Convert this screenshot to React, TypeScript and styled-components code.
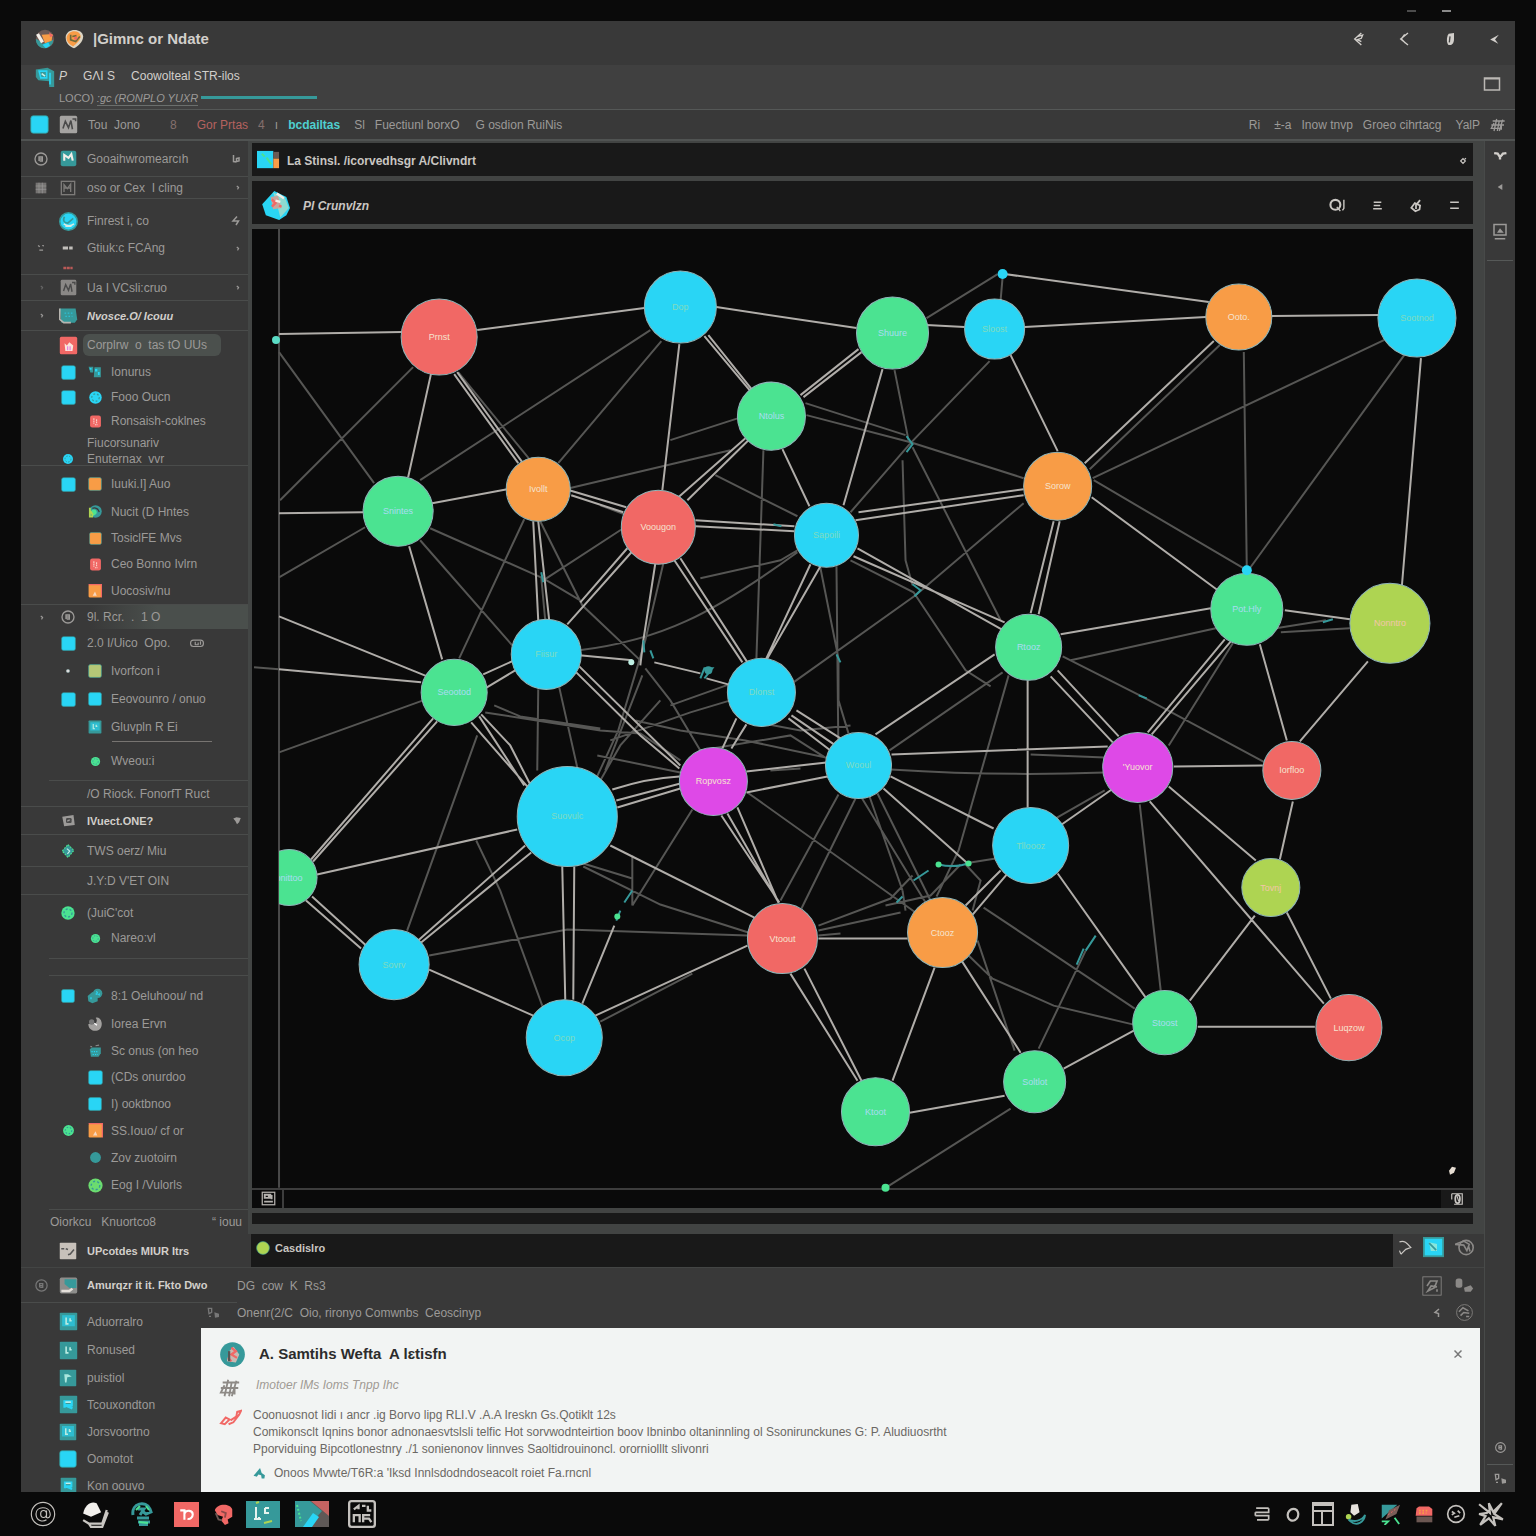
import React from "react";
import styled, { createGlobalStyle } from "styled-components";

const C = {
  black: "#0a0a0a",
  panel: "#191919",
  shell: "#393939",
  shellLight: "#404040",
  line: "#4a4c4b",
  text: "#9c9a98",
  bright: "#d2cfcb",
  teal: "#36999a",
  cyan: "#29d5f5",
  green: "#4be391",
  red: "#f16865",
  orange: "#f89c46",
  lime: "#aed452",
  magenta: "#de49e7",
  paper: "#f2f4f3",
};

const Global = createGlobalStyle`
  *, *::before, *::after { box-sizing: border-box; }
  body { margin: 0; background: ${C.black}; color: ${C.text};
    font-family: "Liberation Sans", Arial, sans-serif; font-size: 12px; line-height: 14px; }
  button { margin: 0; padding: 0; border: 0; background: none; color: inherit; font: inherit; text-align: left; cursor: pointer; }
  svg { display: block; flex: none; }
  h1, h2, p, ul { margin: 0; padding: 0; font: inherit; }
`;

/* ---------- icons ---------- */

type IconProps = { name: string; size?: number; color?: string };

const drawings: Record<string, (c: string) => React.ReactNode> = {
  square: (c) => <rect x="1" y="1" width="22" height="22" rx="3" fill={c} stroke={C.teal} />,
  orangeSquare: () => (
    <>
      <rect x="1" y="1" width="22" height="22" rx="2" fill={C.orange} />
      <path d="M1 1h22v22" fill="none" stroke={C.red} strokeWidth="2" />
      <path d="M8 20l4-7 3 7z" fill="#f8d8c0" />
    </>
  ),
  dot: (c) => <circle cx="12" cy="12" r="11" fill={c} stroke={C.teal} />,
  speckDot: (c) => (
    <>
      <circle cx="12" cy="12" r="10" fill={c} />
      <circle cx="12" cy="12" r="6" fill="none" stroke={C.teal} strokeWidth="2" strokeDasharray="3 3" />
    </>
  ),
  globe: () => (
    <>
      <circle cx="12" cy="12" r="11" fill={C.cyan} stroke={C.teal} strokeWidth="2" />
      <path d="M6 15c4 3 9 3 13 0M8 18h8" fill="none" stroke="#d8ece4" strokeWidth="2" />
      <path d="M7 6c-3 5 0 8 4 8l7-6" fill="none" stroke={C.teal} strokeWidth="2" />
    </>
  ),
  ring: (c) => (
    <>
      <circle cx="12" cy="12" r="9" fill="none" stroke={c} strokeWidth="2" />
      <path d="M9 15V9h5v6h-4M8 12h7" fill="none" stroke={c} strokeWidth="2" />
    </>
  ),
  tile: (c) => (
    <>
      <rect x="1" y="1" width="22" height="22" rx="1" fill={C.teal} />
      <rect x="4" y="4" width="16" height="14" fill={c} opacity="0.6" />
      <path d="M9 7v8h3M14 8v3h2" fill="none" stroke="#b9ece2" strokeWidth="2" />
    </>
  ),
  tileN: () => (
    <>
      <rect x="1" y="1" width="22" height="22" rx="3" fill={C.teal} />
      <path d="M6 15V7l6 4 4-5 2 9" fill="none" stroke="#f2eee8" strokeWidth="3" />
    </>
  ),
  tileP: () => (
    <>
      <rect x="1" y="1" width="22" height="22" rx="1" fill={C.teal} />
      <path d="M7 7h5l5 3-6 1-1 7H8z" fill="#a9e6dd" />
    </>
  ),
  tileR: () => (
    <>
      <rect x="1" y="1" width="22" height="22" rx="1" fill={C.teal} />
      <path d="M7 16V8h9v5H8l9 4" fill="none" stroke={C.cyan} strokeWidth="3" />
      <path d="M8 9h7" stroke="#c8efe8" strokeWidth="2" />
    </>
  ),
  grayTile: (c) => (
    <>
      <rect x="1" y="1" width="22" height="22" rx="2" fill={c} />
      <path d="M5 17l3-9 4 8 3-9 2 11M17 5h4v3" fill="none" stroke="#4a4a4a" strokeWidth="2" />
    </>
  ),
  grayTeal: () => (
    <>
      <rect x="1" y="2" width="22" height="20" rx="2" fill="#8d8d8b" />
      <path d="M7 4h15v11H13L7 10z" fill={C.teal} />
      <path d="M3 19h10l4-3" fill="none" stroke="#e5e0da" strokeWidth="3" />
    </>
  ),
  outlineTile: (c) => (
    <>
      <rect x="2" y="2" width="20" height="20" fill="none" stroke={c} strokeWidth="2" />
      <path d="M6 18V7l5 6 5-7v12M7 12h10" fill="none" stroke={c} strokeWidth="2" />
    </>
  ),
  hatch: (c) => (
    <>
      <rect x="4" y="4" width="16" height="16" fill={c} opacity="0.6" />
      <path d="M4 9h16M4 14h16M9 4v16M14 4v16" stroke={c} />
    </>
  ),
  screen: () => (
    <>
      <path d="M1 3h20l2 14-3 4H3z" fill={C.teal} />
      <path d="M1 3v14l5 4h9" fill="none" stroke="#b8b5b0" strokeWidth="2" />
      <path d="M7 9h11M8 13h9" stroke={C.cyan} strokeDasharray="2 2" />
    </>
  ),
  redTile: () => (
    <>
      <rect x="1" y="1" width="22" height="22" rx="2" fill={C.red} />
      <path d="M7 9l3 3 3-4 5 4-1 7H8z" fill="#fbe6dc" />
      <path d="M11 13v5M14 13v5" stroke={C.magenta} />
    </>
  ),
  redSmall: () => (
    <>
      <rect x="2" y="1" width="20" height="22" rx="4" fill={C.red} />
      <path d="M9 6v10M14 8v8M11 18h5" stroke="#fad4cc" strokeWidth="2" strokeDasharray="3 1" />
    </>
  ),
  pieces: () => (
    <>
      <path d="M1 3h8v10H4zM11 4h11v17H10z" fill={C.teal} />
      <path d="M3 5h3v3H3zM12 7h4v4h-4zM17 12h3v5h-3z" fill={C.cyan} />
    </>
  ),
  cubes: () => (
    <>
      <path d="M1 12l7-6 8 3v11l-8 3-6-3z" fill={C.teal} />
      <circle cx="16" cy="8" r="7" fill={C.teal} />
      <path d="M13 9h6M14 5l5 6M6 14v5" stroke={C.cyan} strokeWidth="2" strokeDasharray="3 2" />
    </>
  ),
  swirl: () => (
    <>
      <circle cx="12" cy="12" r="10" fill={C.teal} />
      <path d="M6 10c4-3 8 0 8 3s-4 6-8 6z" fill={C.green} />
      <path d="M3 6v14h5M4 11l4 7" fill="none" stroke={C.lime} strokeWidth="3" />
      <path d="M7 7c5-2 10 1 11 6" fill="none" stroke="#3a3a3a" strokeWidth="2" />
    </>
  ),
  grayBall: () => (
    <>
      <path d="M2 12c0 14 22 14 20-2-1-7-7-9-9-7 3 2 2 9-3 9z" fill="#a3a19f" />
      <circle cx="7" cy="9" r="4" fill="#777" />
      <path d="M11 11l4 3" stroke="#fff" strokeWidth="2" />
    </>
  ),
  crate: () => (
    <>
      <path d="M3 9l4-3h15v10l-4 6H5z" fill={C.teal} />
      <path d="M6 13h12M8 18h9" stroke={C.cyan} strokeWidth="2" strokeDasharray="2 2" />
      <path d="M4 4l3 1M13 3l6-1" stroke="#888" strokeWidth="2" />
    </>
  ),
  diamond: () => (
    <>
      <path d="M12 1l10 10-10 12L2 12z" fill={C.teal} stroke={C.green} strokeWidth="2" strokeDasharray="3 2" />
      <path d="M10 8l5 4-4 5" fill="none" stroke="#c8efe8" strokeWidth="2" />
    </>
  ),
  camera: (c) => (
    <>
      <path d="M2 6l18-3 2 16-17 2z" fill={c} />
      <rect x="8" y="8" width="9" height="8" rx="2" fill="#4a4a4a" />
      <path d="M10 13l4-2" stroke={c} strokeWidth="2" />
    </>
  ),
  paperTile: () => (
    <>
      <rect x="1" y="1" width="22" height="22" rx="1" fill="#c7c1ba" />
      <path d="M3 9h4M9 9l3 1M12 17l3-1 5-6" fill="none" stroke="#555" strokeWidth="2" />
    </>
  ),
  dash: (c) => <path d="M3 12h9M14 12h6" stroke={c} strokeWidth="5" />,
  redDash: () => <path d="M4 12h16" stroke={C.red} strokeWidth="4" strokeDasharray="5 1" opacity="0.7" />,
  tick: (c) => <path d="M10 8l5 4-3 5" fill="none" stroke={c} strokeWidth="3" />,
  marks: (c) => <path d="M5 6l4 3M15 6l4 1M8 17h9" stroke={c} strokeWidth="3" />,
  chip: (c) => <path d="M7 4v13l6 1M13 11l5-1v6l-5 1z" fill="none" stroke={c} strokeWidth="3" />,
  spark: (c) => <path d="M14 3L6 12h11l-5 8" fill="none" stroke={c} strokeWidth="3" />,
  heart: (c) => <path d="M3 6l8-3 10 2-4 10-5 5-4-8z" fill={c} />,
  capsule: (c) => (
    <>
      <rect x="1" y="7" width="22" height="11" rx="5" fill="none" stroke={c} strokeWidth="2" />
      <path d="M9 10v5h5v-4M18 9v6" fill="none" stroke={c} strokeWidth="2" />
    </>
  ),
  logoA: () => (
    <>
      <circle cx="12" cy="12" r="11" fill="#6d5a55" />
      <path d="M1 12c4 2 5 2 8 6l13-5c0 6-5 10-11 10C5 23 1 18 1 12z" fill={C.teal} />
      <path d="M8 7l13-1-1 8-8 3z" fill={C.orange} />
      <path d="M17 4l5 4-4 2z" fill={C.red} />
      <path d="M3 6l6 10" stroke="#f4efe8" strokeWidth="4" />
      <path d="M9 19l7-3 2 4-5 3z" fill={C.cyan} />
    </>
  ),
  logoB: () => (
    <>
      <path d="M2 10C2-1 22-2 23 9c0 6-6 12-11 14C6 21 2 17 2 10z" fill="#dcd5c4" />
      <path d="M3 11C4 1 18 0 20 8c0 6-5 9-9 13C6 18 3 15 3 11z" fill={C.orange} />
      <path d="M8 7v6l6 2 5-6M10 9l5-1" fill="none" stroke="#6d6a3b" strokeWidth="2" />
      <circle cx="14" cy="11" r="2" fill={C.red} />
    </>
  ),
  logoC: () => (
    <>
      <path d="M1 3l14-2 8 4v19h-6v-7L4 16l-3-4z" fill={C.teal} />
      <path d="M5 5h9v8H7zM18 7v14" fill="none" stroke={C.cyan} strokeWidth="2" />
      <path d="M8 8l4 3" stroke="#c8efe8" strokeWidth="2" />
    </>
  ),
  logoD: () => (
    <>
      <rect x="0" y="2" width="17" height="18" fill={C.cyan} />
      <path d="M5 5l3 3M10 9l5 7" stroke={C.green} strokeWidth="2" />
      <rect x="17" y="3" width="6" height="7" fill="#6a5a52" />
      <rect x="17" y="10" width="6" height="10" fill={C.orange} />
    </>
  ),
  logoE: () => (
    <>
      <path d="M11 0l10 5 3 9-3 6-6 4-11-4-3-9z" fill={C.cyan} />
      <path d="M10 1l10 5 3 8-7 8-2-8z" fill="#8edad0" />
      <path d="M8 5l6-1 3 10-7 1z" fill="#c9a59c" />
      <path d="M9 7l3 3-3 3M15 12l2 1" fill="none" stroke={C.red} strokeWidth="2" />
      <path d="M13 2l6 4M12 8l4 1" fill="none" stroke="#f4efe8" strokeWidth="2" />
    </>
  ),
  chevR: (c) => <path d="M17 3L7 12l10 9M12 8l7-2-2 5-6 2 6 3" fill="none" stroke={c} strokeWidth="2" />,
  chev: (c) => <path d="M18 3L7 12l11 9M13 5l-5 7 6 6" fill="none" stroke={c} strokeWidth="2" />,
  leaf: (c) => (
    <>
      <path d="M10 4l8-1v9c0 6-3 10-8 9-3-2-4-11 0-17z" fill={c} />
      <path d="M12 8l-1 9" stroke="#444" strokeWidth="2" />
    </>
  ),
  arrow: (c) => <path d="M20 3L4 12l15 8-6-8z" fill={c} />,
  window: (c) => <path d="M2 4h20v16H2zM2 5h20" fill="none" stroke={c} strokeWidth="2" />,
  search: (c) => (
    <>
      <circle cx="9" cy="11" r="7" fill="none" stroke={c} strokeWidth="3" />
      <path d="M11 14l5 6M21 4v12l-2 3" fill="none" stroke={c} strokeWidth="2" />
    </>
  ),
  lines: (c) => <path d="M5 6h14M5 12h12M4 18h16" stroke={c} strokeWidth="3" />,
  twoLines: (c) => <path d="M4 6h16M4 17h16" stroke={c} strokeWidth="3" />,
  drop: (c) => <path d="M4 15l6-8 9 4-1 7-7 3zM14 8l5-6M12 8v9" fill="none" stroke={c} strokeWidth="3" />,
  smallRing: (c) => <path d="M8 12l4-4 4 4-4 4zM15 9l2-2" fill="none" stroke={c} strokeWidth="2" />,
  check: (c) => <path d="M2 7l6 1 4 6 5-6 6-1M12 13v5" fill="none" stroke={c} strokeWidth="4" />,
  wedge: (c) => <path d="M8 12l8-5v10z" fill={c} />,
  badge: (c) => (
    <>
      <path d="M4 2h16v14H4zM5 21h14" fill="none" stroke={c} strokeWidth="2" />
      <path d="M8 13l4-6 5 6z" fill={c} />
    </>
  ),
  pair: (c) => (
    <>
      <path d="M5 5h5v6l-4 2zM6 17h3" fill="none" stroke={c} strokeWidth="2" />
      <path d="M14 11l7 2v5l-6 1z" fill={c} />
    </>
  ),
  disk: (c) => (
    <>
      <rect x="2" y="2" width="20" height="20" fill="none" stroke={c} strokeWidth="2" />
      <path d="M6 6h9v5H6zM5 17h14M11 8h6v5" fill="none" stroke={c} strokeWidth="3" />
    </>
  ),
  zero: (c) => (
    <>
      <path d="M3 3h18v18H7" fill="none" stroke={c} strokeWidth="2" />
      <ellipse cx="13" cy="12" rx="4" ry="7" fill="none" stroke={c} strokeWidth="3" />
      <path d="M3 3v10M12 7l3 9" stroke={c} strokeWidth="2" />
    </>
  ),
  bend: (c) => <path d="M4 3c8-3 12 2 18 9l-8 3-8 8M6 22l-2-5" fill="none" stroke={c} strokeWidth="2" />,
  eye: (c) => (
    <>
      <circle cx="14" cy="12" r="9" fill="none" stroke={c} strokeWidth="2" />
      <path d="M0 8l11-4 7 4-3 8-4-7zM17 10l2 7" fill="none" stroke={c} strokeWidth="2" />
    </>
  ),
  linkBox: (c) => (
    <>
      <rect x="1" y="1" width="22" height="22" fill="none" stroke={c} strokeWidth="1" />
      <path d="M6 12l4-6h8l-3 8-8 4 4-6 7 1M18 16v3" fill="none" stroke={c} strokeWidth="2" />
    </>
  ),
  blobs: (c) => (
    <>
      <rect x="2" y="3" width="8" height="11" rx="3" fill={c} />
      <path d="M12 14l8-3 3 4-3 4h-7z" fill={c} />
    </>
  ),
  back: (c) => <path d="M16 4l-8 7 7 2v7" fill="none" stroke={c} strokeWidth="3" />,
  chartRing: (c) => (
    <>
      <circle cx="12" cy="12" r="10" fill="none" stroke={c} strokeWidth="1" />
      <path d="M5 11l5-5 7 4M7 16l4-4 7 1M14 17h4" fill="none" stroke={c} strokeWidth="2" />
    </>
  ),
  cyanBox: () => (
    <>
      <rect x="1" y="1" width="22" height="21" fill={C.cyan} stroke={C.teal} strokeWidth="2" />
      <path d="M7 6l9 2v8H9z" fill="#86e6dc" />
      <path d="M7 7l8 8" stroke={C.teal} strokeWidth="2" />
    </>
  ),
  pen: () => <path d="M2 17l5-6 4 2-5 5zM10 18l5-2 6-8 2-4-4 1-1 5-6 4" fill="none" stroke={C.red} strokeWidth="2" />,
  scribble: (c) => (
    <path d="M4 6h18M2 12h19M6 9l-4 8h13M10 3L6 21M14 5l-3 16M19 4l-5 17M4 17h12M17 10v9" fill="none" stroke={c} strokeWidth="2" />
  ),
  person: () => (
    <>
      <circle cx="12" cy="12" r="11" fill={C.teal} />
      <path d="M7 18l2-9 4-4 5 7-3 7z" fill="#c9b9b2" />
      <path d="M11 6l4 3-4 3 5 3M8 15l3 3" fill="none" stroke={C.red} strokeWidth="2" />
      <path d="M9 9v9" stroke="#555" strokeWidth="2" />
    </>
  ),
  sail: () => <path d="M1 16L13 2l3 9 6 4-1 6h-5l-1-6-5-1-3 4z" fill={C.teal} />,
  close: (c) => <path d="M5 5l6 6v3l-6 5M19 5l-6 6v3l6 5M10 12h4" fill="none" stroke={c} strokeWidth="3" />,
  at: (c) => (
    <>
      <circle cx="12" cy="12" r="10" fill="none" stroke={c} strokeWidth="1" />
      <path d="M15 9v6c2 1 4-1 3-4-1-6-12-6-12 1 0 6 6 7 9 5M15 12c0-4-5-4-5 0s5 4 5 0" fill="none" stroke={c} strokeWidth="1" />
    </>
  ),
  hat: () => (
    <>
      <path d="M1 11C3 3 8 0 13 2l4 8-9 4z" fill="#f2f0ed" />
      <path d="M1 17l5 3h12l4-12M6 20l2 3h10l5-13" fill="none" stroke="#c9c6c2" strokeWidth="2" />
    </>
  ),
  bust: () => (
    <>
      <path d="M3 13C1 1 16-2 20 7l1 3-5 2-4-3M8 7h6l-4 6M7 16h12M8 20h12M9 23h9" fill="none" stroke={C.teal} strokeWidth="3" />
      <path d="M6 8l4-4M16 4l3 4M9 20l9 1" stroke={C.green} strokeWidth="2" />
    </>
  ),
  redApp: () => (
    <>
      <rect x="0" y="0" width="24" height="24" fill={C.red} />
      <path d="M6 8h4v9M10 11c2-4 8-3 8 1 0 3-3 5-5 4" fill="none" stroke="#fff" strokeWidth="2" />
    </>
  ),
  redPin: () => (
    <>
      <path d="M2 8C4 0 19 0 21 7v8l-5 3 1 4-4 2-4-5 2-4-6-2z" fill={C.red} />
      <path d="M9 9l5 2-1 5" fill="none" stroke="#8f4a48" strokeWidth="2" />
      <path d="M3 11l3 7 4 1" fill="none" stroke="#6b5752" strokeWidth="2" />
    </>
  ),
  kite: () => (
    <>
      <path d="M3 2h17L3 17z" fill={C.teal} />
      <path d="M7 18L11 8l12-6-4 10z" fill="#7a5d58" />
      <path d="M3 20h7l-4 4M17 16l5 7" fill="none" stroke={C.green} strokeWidth="2" />
      <path d="M10 13l9-7" stroke={C.red} strokeDasharray="2 2" />
    </>
  ),
  sticker: (c) => (
    <>
      <rect x="1" y="1" width="22" height="22" rx="2" fill="none" stroke={c} strokeWidth="2" />
      <path d="M5 8l4-3v3M12 5h3M17 5v4h3M5 19v-6h5v6M13 19v-6h6M13 16h5l2 3" fill="none" stroke={c} strokeWidth="2" />
    </>
  ),
  stack: (c) => <path d="M5 5h15M4 10h17M4 14h17M6 19h14M4 10v4M20 5v5M20 14v5" fill="none" stroke={c} strokeWidth="2" />,
  oval: (c) => <ellipse cx="12" cy="13" rx="7" ry="8" fill="none" stroke={c} strokeWidth="3" transform="rotate(20 12 13)" />,
  layout: (c) => <path d="M2 1h20v22H2zM2 9h20M11 9v14M2 3h20" fill="none" stroke={c} strokeWidth="2" />,
  dish: () => (
    <>
      <path d="M8 2l7-1 2 9-6 4-4-4z" fill="#e6e2dd" />
      <circle cx="5" cy="15" r="3" fill={C.lime} />
      <path d="M5 18c6 3 14 2 18-5-1 8-9 13-16 7z" fill="none" stroke={C.teal} strokeWidth="2" />
    </>
  ),
  lunch: () => (
    <>
      <path d="M3 5l3-2h12l4 3v8H2z" fill={C.red} />
      <path d="M6 8h12M6 11h9" stroke={C.orange} strokeWidth="2" strokeDasharray="2 2" />
      <path d="M3 15h19v7H3z" fill="#6b5752" />
    </>
  ),
  face: (c) => (
    <>
      <circle cx="12" cy="12" r="10" fill="none" stroke={c} strokeWidth="2" />
      <path d="M7 9l3 2-3 2M14 8l3 3M10 16l6-2" fill="none" stroke={c} strokeWidth="2" />
    </>
  ),
  burst: (c) => (
    <path d="M1 3l10 8-1-9 4 8 8-8-7 10 8 5-9-2 2 8-6-7-8 6 5-8-6-2 8-1" fill="none" stroke={c} strokeWidth="2" />
  ),
};

const Icon = ({ name, size = 16, color = C.text }: IconProps) => (
  <svg width={size} height={size} viewBox="0 0 24 24" aria-hidden="true">
    {drawings[name](color)}
  </svg>
);

/* ---------- shell ---------- */

const Page = styled.div`
  min-height: 100vh;
  display: flex;
  flex-direction: column;
`;

const TopStrip = styled.div`
  height: 21px;
  padding: 0 85px;
  display: flex;
  justify-content: flex-end;
  align-items: center;
  gap: 26px;
`;

const StripMark = styled.i<{ $dim?: boolean }>`
  width: 9px;
  height: 2px;
  background: ${(p) => (p.$dim ? "#4c4c4c" : "#8a8a8a")};
`;

const Shell = styled.main`
  flex: 1;
  margin: 0 21px;
  background: ${C.shell};
`;

const TitleBar = styled.header`
  height: 44px;
  padding: 0 14px 8px;
  display: flex;
  align-items: center;
  gap: 9px;
  color: ${C.bright};
`;

const Title = styled.h1`
  font-weight: 600;
  font-size: 15px;
  line-height: 20px;
  flex: 1;
`;

const TitleActions = styled.div`
  display: flex;
  align-items: center;
  gap: 30px;
`;

const SubBar = styled.div`
  height: 45px;
  background: ${C.shellLight};
  border-bottom: 1px solid #555857;
  padding: 2px 14px 8px;
  display: flex;
  align-items: flex-start;
`;

const SubText = styled.div`
  flex: 1;
  display: flex;
  flex-direction: column;
  gap: 8px;
  padding: 2px 0 0 4px;
`;

const SubLine = styled.div`
  display: flex;
  align-items: center;
  gap: 16px;
  color: ${C.bright};
`;

const SubTabs = styled.div`
  display: flex;
  align-items: flex-start;
  gap: 3px;
  font-size: 11px;
  em { border-bottom: 1px solid #6b6f6d; }
`;

const TabLine = styled.span`
  width: 116px;
  height: 3px;
  margin-top: 5px;
  background: ${C.teal};
`;

const WindowButton = styled.button`
  align-self: center;
`;

const ToolBar = styled.nav`
  height: 31px;
  border-bottom: 2px solid #505352;
  padding: 0 9px;
  display: flex;
  align-items: center;
  gap: 10px;
`;

const ToolItem = styled.button<{ $tone?: string; $strong?: boolean; $gap?: number }>`
  color: ${(p) => p.$tone ?? C.text};
  font-weight: ${(p) => (p.$strong ? 700 : 400)};
  margin-left: ${(p) => p.$gap ?? 0}px;
  white-space: nowrap;
`;

const Spacer = styled.span`
  flex: 1;
`;

const Columns = styled.div`
  display: flex;
`;

const Content = styled.div`
  flex: 1;
  min-width: 0;
`;

/* ---------- sidebar ---------- */

const Side = styled.nav`
  width: 229px;
  flex: none;
  border-right: 2px solid #434645;
`;

const Row = styled.button<{ $h: number; $line?: boolean; $tint?: boolean }>`
  width: 100%;
  height: ${(p) => p.$h}px;
  padding: 0 6px 0 8px;
  display: grid;
  grid-template-columns: 24px 30px 24px 1fr auto;
  align-items: center;
  justify-items: center;
  border-bottom: ${(p) => (p.$line ? "1px solid " + C.line : "0")};
  background: ${(p) => (p.$tint ? "linear-gradient(90deg, #393939 30%, #4a4f4c 60%)" : "none")};
`;

const Label = styled.span<{ $deep?: boolean; $strong?: boolean; $italic?: boolean; $pill?: boolean }>`
  grid-column: ${(p) => (p.$deep ? "4 / 5" : "3 / 5")};
  justify-self: start;
  padding-left: 4px;
  white-space: pre;
  color: ${(p) => (p.$strong ? C.bright : C.text)};
  font-weight: ${(p) => (p.$strong ? 700 : 400)};
  font-size: ${(p) => (p.$strong ? 11 : 12)}px;
  font-style: ${(p) => (p.$italic ? "italic" : "normal")};
  ${(p) => p.$pill && "background:#4b504d;border-radius:6px;line-height:22px;padding-right:14px;"}
`;

const Rule = styled.div<{ $h: number; $line?: boolean; $short?: boolean }>`
  height: ${(p) => p.$h}px;
  margin-left: ${(p) => (p.$short ? 91 : 28)}px;
  margin-right: ${(p) => (p.$short ? 36 : 0)}px;
  border-bottom: ${(p) => (p.$line ? "1px solid " + (p.$short ? "#777471" : C.line) : "0")};
`;

const Slot = styled.span<{ $col: number; $inset?: boolean }>`
  grid-column: ${(p) => p.$col};
  grid-row: 1;
  padding-right: ${(p) => (p.$inset ? 38 : 0)}px;
`;

type Glyph = [name: string, size: number, color?: string];
type Item = {
  h: number;
  text?: string;
  a?: Glyph;
  b?: Glyph;
  c?: Glyph;
  tail?: Glyph;
  deep?: boolean;
  strong?: boolean;
  italic?: boolean;
  line?: boolean;
  short?: boolean;
  pill?: boolean;
  tint?: boolean;
  inset?: boolean;
};

const items: Item[] = [
  { h: 36, text: "Gooaihwromearcıh", a: ["ring", 16], b: ["tileN", 17], tail: ["chip", 12], line: true },
  { h: 22, text: "oso or Cex  I cling", a: ["hatch", 16], b: ["outlineTile", 16, "#7d7b79"], tail: ["tick", 9], line: true },
  { h: 8 },
  { h: 28, text: "Finrest i, co", b: ["globe", 19], tail: ["spark", 12] },
  { h: 26, text: "Gtiuk:c FCAng", a: ["marks", 10], b: ["dash", 14, "#c2bfbb"], tail: ["tick", 9] },
  { h: 14, b: ["redDash", 14], line: true },
  { h: 26, text: "Ua I VCsli:cruo", a: ["tick", 9, "#666"], b: ["grayTile", 17, "#8a8886"], tail: ["tick", 9], line: true },
  { h: 30, text: "Nvosce.O/ Icouu", a: ["tick", 9], b: ["screen", 19], strong: true, italic: true, line: true },
  { h: 28, text: "Corplrw  o  tas tO UUs", b: ["redTile", 19], pill: true },
  { h: 26, text: "Ionurus", b: ["square", 15, C.cyan], c: ["pieces", 14], deep: true },
  { h: 24, text: "Fooo Oucn", b: ["square", 15, C.cyan], c: ["speckDot", 15, C.cyan], deep: true },
  { h: 24, text: "Ronsaish-coklnes", c: ["redSmall", 13], deep: true },
  { h: 19, text: "Fiucorsunariv" },
  { h: 14, text: "Enuternax  vvr", b: ["speckDot", 12, C.cyan], line: true },
  { h: 4 },
  { h: 28, text: "Iuuki.I] Auo", b: ["square", 15, C.cyan], c: ["square", 14, C.orange], deep: true },
  { h: 27, text: "Nucit (D Hntes", c: ["swirl", 15], deep: true },
  { h: 26, text: "TosiclFE Mvs", c: ["square", 13, C.orange], deep: true },
  { h: 26, text: "Ceo Bonno Ivlrn", c: ["redSmall", 13], deep: true },
  { h: 28, text: "Uocosiv/nu", c: ["orangeSquare", 14], deep: true, line: true },
  { h: 24, text: "9l. Rcr.  .  1 O", a: ["tick", 9], b: ["ring", 16], tint: true },
  { h: 28, text: "2.0 I/Uico  Opo.", b: ["square", 15, C.cyan], tail: ["capsule", 14], inset: true },
  { h: 28, text: "Ivorfcon i", b: ["dot", 4, "#ddd"], c: ["square", 14, "#b5c877"], deep: true },
  { h: 28, text: "Eeovounro / onuo", b: ["square", 15, C.cyan], c: ["square", 14, C.cyan], deep: true },
  { h: 28, text: "Gluvpln R Ei", c: ["tile", 14, C.cyan], deep: true },
  { h: 1, line: true, short: true },
  { h: 5 },
  { h: 28, text: "Wveou:i", c: ["speckDot", 11, C.green], deep: true },
  { h: 6, line: true },
  { h: 26, text: "/O Riock. FonorfT Ruct", line: true },
  { h: 28, text: "IVuect.ONE?", b: ["camera", 15], tail: ["heart", 10], strong: true, line: true },
  { h: 32, text: "TWS oerz/ Miu", b: ["diamond", 14], line: true },
  { h: 28, text: "J.Y:D V'ET OIN", line: true },
  { h: 4 },
  { h: 28, text: "(JuiC'cot", b: ["speckDot", 16, C.green] },
  { h: 22, text: "Nareo:vl", c: ["speckDot", 11, C.green], deep: true },
  { h: 10, line: true },
  { h: 17, line: true },
  { h: 6 },
  { h: 28, text: "8:1 Oeluhoou/ nd", b: ["square", 14, C.cyan], c: ["cubes", 16], deep: true },
  { h: 27, text: "Iorea Ervn", c: ["grayBall", 16], deep: true },
  { h: 27, text: "Sc onus (on heo", c: ["crate", 14], deep: true },
  { h: 26, text: "(CDs onurdoo", c: ["square", 15, C.cyan], deep: true },
  { h: 27, text: "I) ooktbnoo", c: ["square", 14, C.cyan], deep: true },
  { h: 27, text: "SS.Iouo/ cf or", b: ["speckDot", 13, C.green], c: ["orangeSquare", 15], deep: true },
  { h: 27, text: "Zov zuotoirn", c: ["speckDot", 13, C.teal], deep: true },
  { h: 28, text: "Eog I /Vulorls", c: ["speckDot", 17, "#6bdc6f"], deep: true },
  { h: 11, line: true },
];

const glyph = (g: Glyph | undefined, col: number, inset?: boolean) =>
  g && (
    <Slot $col={col} $inset={inset}>
      <Icon name={g[0]} size={g[1]} color={g[2]} />
    </Slot>
  );

const SideRow = ({ item }: { item: Item }) => {
  if (!item.text && !item.b) return <Rule $h={item.h} $line={item.line} $short={item.short} />;
  return (
    <Row type="button" $h={item.h} $line={item.line} $tint={item.tint}>
      {glyph(item.a, 1)}
      {glyph(item.b, 2)}
      {glyph(item.c, 3)}
      <Label $deep={item.deep} $strong={item.strong} $italic={item.italic} $pill={item.pill}>
        {item.text}
      </Label>
      {glyph(item.tail, 5, item.inset)}
    </Row>
  );
};

const SideFoot = styled.div`
  height: 24px;
  padding: 0 6px 0 29px;
  display: flex;
  align-items: center;
  gap: 10px;
`;

/* ---------- graph ---------- */

const Work = styled.section`
  flex: 1;
  min-width: 0;
  padding: 2px 11px 0 2px;
  background: #424443;
  display: flex;
  flex-direction: column;
  gap: 5px;
`;

const DocBar = styled.div<{ $tall?: boolean }>`
  height: ${(p) => (p.$tall ? 43 : 33)}px;
  background: ${C.panel};
  color: #c9c6c2;
  padding: ${(p) => (p.$tall ? "6px 12px 0 9px" : "2px 3px 0 5px")};
  display: flex;
  align-items: center;
  gap: 7px;
`;

const DocTitle = styled.span<{ $wide?: boolean }>`
  flex: 1;
  font-weight: 700;
  font-style: ${(p) => (p.$wide ? "italic" : "normal")};
  padding-left: ${(p) => (p.$wide ? 6 : 0)}px;
`;

const DocActions = styled.div`
  display: flex;
  align-items: center;
  gap: 25px;
`;

const Stage = styled.div`
  background: ${C.black};
`;

const Graph = styled.svg`
  width: 100%;
  height: auto;
  overflow: visible;
  position: relative;
  z-index: 1;
  text { font: 9px "Liberation Sans", Arial, sans-serif; text-anchor: middle; }
`;

const StageFoot = styled.div`
  height: 20px;
  border-top: 2px solid #3d3d3d;
  display: flex;
  align-items: center;
  justify-content: space-between;
`;

const FootCell = styled.button`
  height: 18px;
  padding: 0 6px 0 9px;
  display: flex;
  align-items: center;
  border-right: 2px solid #3d3d3d;
  &:last-child { border-right: 0; padding: 0 9px; background: ${C.panel}; }
`;

const Shelf = styled.div`
  height: 11px;
  background: ${C.panel};
`;

type Node = [x: number, y: number, r: number, fill: string, label: string];

const nodes: Node[] = [
  [439, 337, 38, C.red, "Prnst"],
  [680, 307, 36, C.cyan, "Dop"],
  [892, 333, 36, C.green, "Shuure"],
  [994, 329, 30, C.cyan, "Sloost"],
  [1238, 317, 33, C.orange, "Ooto."],
  [1416, 318, 39, C.cyan, "Sootnod"],
  [771, 416, 34, C.green, "Ntolus"],
  [538, 489, 32, C.orange, "Ivollt"],
  [398, 511, 35, C.green, "Snintes"],
  [658, 527, 37, C.red, "Voougon"],
  [826, 535, 32, C.cyan, "Sapoili"],
  [1057, 486, 34, C.orange, "Sorow"],
  [1246, 609, 36, C.green, "Pot.Hly"],
  [1389, 623, 40, C.lime, "Nonntro"],
  [546, 654, 35, C.cyan, "Fiisur"],
  [454, 692, 33, C.green, "Seootod"],
  [761, 692, 34, C.cyan, "Dlonst"],
  [1028, 647, 33, C.green, "Rtooz"],
  [858, 765, 33, C.cyan, "Wooul"],
  [713, 781, 34, C.magenta, "Ropvosz"],
  [1137, 767, 35, C.magenta, "'Yuovor"],
  [1291, 770, 29, C.red, "Iorfloo"],
  [567, 816, 50, C.cyan, "Suovulc"],
  [1030, 845, 38, C.cyan, "Tlloooz"],
  [1270, 887, 29, C.lime, "Tovnj"],
  [289, 877, 28, C.green, "onittoo"],
  [394, 964, 35, C.cyan, "Sovrv"],
  [564, 1037, 38, C.cyan, "Ocop"],
  [782, 938, 35, C.red, "Vtoout"],
  [942, 932, 35, C.orange, "Ctooz"],
  [1164, 1022, 32, C.green, "Stoost"],
  [1348, 1027, 33, C.red, "Luqzow"],
  [875, 1111, 34, C.green, "Ktoot"],
  [1034, 1081, 31, C.green, "Soltlot"],
];

const strongEdges = `
M279 334L402 332M477 330L644 308M716 307L856 328M431 373L408 477M457 372L522 462M454 374L518 463
M679 344L662 490M704 336L750 391M708 335L752 390M858 349L800 395M861 352L803 397M882 369L843 505
M745 438L678 497M748 440L687 500M782 449L809 506M926 325L964 327M1024 327L1205 317M1004 274L1208 302
M1271 316L1378 315M1010 355L1057 451M1213 341L1084 463M858 512L1023 489M855 520L1023 495
M1091 497L1217 590M1420 358L1401 585M1053 521L1030 613M1059 521L1038 614M857 548L1001 629M853 556L1004 622
M1060 634L1210 608M1284 610L1349 619M569 490L626 507M571 495L623 512M695 520L794 526M695 526L794 531
M432 503L507 489M279 513L363 512M409 546L442 659M279 616L427 676M279 669L421 682
M533 521L538 620M538 521L549 620M627 548L580 602M632 551L567 624M674 560L742 662M680 558L747 662
M820 566L767 658M810 564L765 660M483 674L514 660M485 688L515 670
M579 666L680 765M576 672L640 735L679 768M433 718L311 859M437 721L313 861M471 722L527 786M479 716L524 785
M481 714L510 745L530 784M317 874L517 829M525 845L418 940M531 852L421 942M306 900L361 948M312 896L366 945
M429 969L533 1015M562 866L565 999M574 866L573 999M595 1015L747 945M610 845L754 917
M612 789C640 780 660 777 679 776M616 800L680 783M617 807L680 788M721 815L779 902M727 813L777 900M737 807L778 902
M746 771L826 762M746 792L827 776M790 973L857 1080M804 968L861 1080M818 938L907 938M934 967L892 1080
M909 1112L1004 1095M1063 1068L1133 1030M961 960L1020 1052M1197 1026L1314 1026M891 754L1107 746
M890 776L993 828M883 788L966 862M1027 680L1027 807M1050 676L1112 742M1057 670L1118 736
M994 654L875 734M1111 789L1061 824M1173 766L1262 765M1259 644L1286 740M1367 661L1299 741
M1224 639L1147 732M1230 641L1151 734M1168 786L1255 860M1149 801L1323 1003M1292 801L1279 859
M1254 915L1189 1000M1286 912L1330 998M1057 873L1145 997M1000 870L965 905M1006 874L972 914
M746 724L731 748M736 718L722 748M791 715L835 745M796 710L840 738M788 718L830 750
M614 925L582 1003M655 563L643 640L640 665M579 655L632 660M654 662L700 673M706 678L735 686`;

const softEdges = `
M279 352L374 483M413 367L280 500M420 480L650 330M558 463L661 341M279 577L365 527M430 528L543 578L580 600
M420 540L512 645M524 519L459 658M569 488L730 450M670 440L738 418M715 475L797 516M763 450L756 658
M805 403L905 435M806 415L910 442L1023 478M894 370L908 440M989 361L910 443L850 512M912 447L1000 620
M902 460L905 560L912 585M1023 503L915 595L793 682M850 560L913 592L965 670L990 686M1243 352L1246 570
M1219 345L1089 469M1383 340L1092 478M1404 354L1249 568M1093 480L1243 568M1062 656L1141 696L1264 762
M1232 643L1168 745M1008 675L958 850L936 896M1002 672L889 750M890 769Q1000 776 1104 772M1030 754L1104 757
M279 752L423 700M477 735L407 930M476 840L500 890L542 1005M429 955L567 929L747 935M583 866L660 904L748 932
M583 863L632 878M692 809L632 905M538 689L537 770M559 687L577 767M579 650C660 640 710 615 797 552
M540 521L582 605L640 660M1139 804L1160 990M983 907L1134 1008M968 955L992 978L1053 1005L1133 1024
M1085 950L1038 1048M977 940L1014 1050M1010 1108L885 1187M838 794L780 900M855 798L801 908M747 792L915 912
M861 797L925 902M869 796L902 890M877 793L930 900M1070 660L1215 628M1280 632L1349 628M1275 628L1325 620
M997 274L926 318M1002 277L1000 300M600 1021L692 973M623 528L543 580M458 372L530 460
M600 505L640 520M700 578L780 560L797 550M254 667L279 669M820 568L838 658L838 700L848 733M836 566L838 760
M485 712L600 730L640 733L680 760M494 705L520 716L600 728M663 563L645 640L618 730L595 780M642 675L605 770
M660 700L620 745L600 780M645 668L670 700L700 750M670 705L740 680M635 720L680 730L745 740L830 758
M700 750L790 735L826 758M747 720L800 730L850 725M597 755L680 772M610 740L690 712L730 700
M818 925L890 898L912 875M818 930L900 912M885 905L930 895L960 864
M1104 790L1055 818M965 864L980 880L972 910
M902 890L905 910M541 577L545 620M770 770L800 768M632 855L632 905M818 935L840 933M970 862L995 858`;

const tealMarks = `M938 864Q955 868 970 862M913 880L928 870M1095 935L1085 950M1083 948L1076 964M632 890L624 902M620 910L616 920
M906 436L912 444L906 452M912 584L920 590L914 596M1322 622L1332 619M1138 695L1146 698M773 524L781 526M643 640L644 652M650 650L653 658
M700 678L704 668L712 668L704 678M836 654L840 662M541 572L543 582M896 902L902 896`;

const pins: [number, number, number, string][] = [
  [276, 340, 4, "#5bdcc6"],
  [1002, 274, 5, C.cyan],
  [1246, 570, 5, C.cyan],
  [885, 1187, 4, C.green],
  [631, 662, 3, "#bff0e4"],
  [968, 863, 3, C.green],
  [938, 864, 3, C.green],
  [617, 916, 3, C.green],
  [708, 670, 4, C.teal],
];

const labelTone = (fill: string) => {
  if (fill === C.green) return "#a9dcf2";
  if (fill === C.cyan) return "#7fdcc0";
  if (fill === C.lime) return "#f3c7a8";
  return "#f6e3cf";
};

const NodeGraph = () => (
  <Graph viewBox="252 229 1220 958" role="img" aria-label="Node graph">
    <defs>
      <clipPath id="stage">
        <rect x="279" y="229" width="1193" height="965" />
      </clipPath>
    </defs>
    <path d="M279 229V1187" stroke="#4a4a4a" strokeWidth="2" />
    <path d={softEdges} fill="none" stroke="#565654" strokeWidth="2" />
    <path d={strongEdges} fill="none" stroke="#b0ada9" strokeWidth="2" />
    <path d={tealMarks} fill="none" stroke={C.teal} strokeWidth="2" />
    <g clipPath="url(#stage)">
      {nodes.map(([x, y, r, fill, label]) => (
        <g key={`${x}-${y}`}>
          <circle cx={x} cy={y} r={r} fill={fill} stroke="#8fb5b8" strokeWidth="1" />
          <text x={x} y={y + 3} fill={labelTone(fill)}>
            {label}
          </text>
        </g>
      ))}
    </g>
    {pins.map(([x, y, r, fill]) => (
      <circle key={`${x}-${y}`} cx={x} cy={y} r={r} fill={fill} />
    ))}
    <path d="M1448 1170l3-4 4 1-2 5-4 2z" fill="#e6ddd2" />
  </Graph>
);

/* ---------- lower area ---------- */

const StatusLine = styled.div`
  height: 34px;
  display: flex;
  align-items: center;
  border-bottom: 1px solid #434544;
`;

const StatusLead = styled.div`
  width: 230px;
  flex: none;
`;

const StatusBar = styled.div`
  flex: 1;
  height: 33px;
  padding: 0 5px 6px;
  background: ${C.panel};
  display: flex;
  align-items: center;
  gap: 5px;
  color: #c9c6c2;
  font-size: 11px;
  font-weight: 700;
`;

const StatusTools = styled.div`
  width: 91px;
  height: 33px;
  padding: 0 10px 6px 4px;
  display: flex;
  align-items: center;
  justify-content: space-between;
`;

const InfoLine = styled.div<{ $h: number; $raised?: boolean }>`
  height: ${(p) => p.$h}px;
  padding-bottom: ${(p) => (p.$raised ? 6 : 0)}px;
  display: flex;
  align-items: center;
  white-space: pre;
`;

const InfoLead = styled.div`
  width: 216px;
  flex: none;
`;

const InfoTools = styled.div`
  margin-left: auto;
  padding-right: 10px;
  display: flex;
  align-items: center;
  gap: 12px;
`;

const LeadTail = styled.div`
  width: 216px;
  flex: none;
  padding-right: 16px;
  display: flex;
  justify-content: flex-end;
`;

const Lower = styled.div`
  display: flex;
  height: 164px;
`;

const ShortList = styled.nav`
  width: 180px;
  flex: none;
  margin-top: -21px;
  overflow: hidden;
`;

const Sheet = styled.article`
  flex: 1;
  margin-right: 4px;
  background: ${C.paper};
  color: #6b6864;
  padding: 13px 16px 0 18px;
  line-height: 17px;
`;

const SheetHead = styled.div`
  display: flex;
  align-items: center;
  gap: 13px;
  height: 26px;
`;

const SheetTitle = styled.h2`
  flex: 1;
  color: #2c2c2c;
  font-size: 15px;
  font-weight: 700;
  line-height: 20px;
  white-space: pre;
`;

const SheetRow = styled.div<{ $gap: number }>`
  display: flex;
  align-items: flex-start;
  gap: 11px;
  margin-top: ${(p) => p.$gap}px;
`;

const SheetNote = styled.p<{ $pale?: boolean }>`
  color: ${(p) => (p.$pale ? "#a09a94" : "inherit")};
  font-style: ${(p) => (p.$pale ? "italic" : "normal")};
  padding-left: ${(p) => (p.$pale ? 4 : 0)}px;
`;

const Nested = styled.div`
  display: flex;
  align-items: center;
  gap: 8px;
  margin-top: 7px;
  padding-left: 34px;
`;

const Rail = styled.aside`
  width: 31px;
  flex: none;
  border-left: 1px solid #484a49;
  display: flex;
  flex-direction: column;
  align-items: center;
`;

const RailCell = styled.button<{ $h: number; $line?: boolean }>`
  width: 26px;
  height: ${(p) => p.$h}px;
  display: flex;
  align-items: center;
  justify-content: center;
  border-bottom: ${(p) => (p.$line ? "1px solid #565958" : "0")};
`;

/* ---------- task bar ---------- */

const TaskBar = styled.footer`
  height: 44px;
  padding: 0 26px 0 17px;
  display: flex;
  align-items: center;
`;

const TaskButton = styled.button<{ $w: number }>`
  width: ${(p) => p.$w}px;
  height: 44px;
  display: flex;
  align-items: center;
  justify-content: center;
`;

const BoardThumb = () => (
  <svg width="34" height="27" viewBox="0 0 34 27" aria-hidden="true">
    <rect width="34" height="27" fill={C.teal} />
    <path d="M10 6v13M8 18h7M19 7h4M19 7v5h4M13 16v3" fill="none" stroke="#e6f3ee" strokeWidth="2" />
    <path d="M18 22l8-2M10 2l3-1" stroke={C.lime} strokeWidth="2" />
  </svg>
);

const PhotoThumb = () => (
  <svg width="34" height="26" viewBox="0 0 34 26" aria-hidden="true">
    <rect width="34" height="26" fill="#5f5957" />
    <path d="M0 0h15l12 10-14 16H0z" fill={C.teal} />
    <path d="M16 0h18v15z" fill={C.red} opacity="0.7" />
    <path d="M18 12l6 4-7 10h-9z" fill={C.cyan} />
    <path d="M2 4l4 16" stroke={C.green} strokeWidth="2" strokeDasharray="2 2" />
  </svg>
);

const leftTasks: [number, string, number, string, string?][] = [
  [52, "at", 28, "Mail", "#c4c1bd"],
  [52, "hat", 27, "Assistant"],
  [42, "bust", 24, "Profile"],
  [46, "redApp", 25, "Notes"],
  [29, "redPin", 22, "Places"],
  [50, "board", 34, "Board"],
  [48, "photo", 34, "Photos"],
  [52, "sticker", 28, "Stickers", "#c4c1bd"],
];

const rightTasks: [number, string, number, string][] = [
  [32, "stack", 20, "Layers"],
  [30, "oval", 18, "Focus"],
  [30, "layout", 24, "Layout"],
  [34, "dish", 22, "Sync"],
  [36, "kite", 22, "Draw"],
  [32, "lunch", 20, "Files"],
  [32, "face", 20, "Status"],
  [38, "burst", 26, "Power"],
];

const shortItems: Item[] = [
  { h: 29, text: "Aduorralro", b: ["tile", 19, C.cyan] },
  { h: 28, text: "Ronused", b: ["tile", 19, C.teal] },
  { h: 27, text: "puistiol", b: ["tileP", 18] },
  { h: 27, text: "Tcouxondton", b: ["tileR", 19] },
  { h: 27, text: "Jorsvoortno", b: ["tile", 18, C.cyan] },
  { h: 27, text: "Oomotot", b: ["square", 18, C.cyan] },
  { h: 27, text: "Kon oouvo", b: ["tileR", 17] },
];

export default function App() {
  return (
    <Page>
      <Global />
      <TopStrip>
        <StripMark $dim />
        <StripMark />
      </TopStrip>
      <Shell>
        <TitleBar>
          <Icon name="logoA" size={20} />
          <Icon name="logoB" size={20} />
          <Title>|Gimnc or Ndate</Title>
          <TitleActions>
            <button type="button" aria-label="Back"><Icon name="chevR" color={C.bright} /></button>
            <button type="button" aria-label="Previous"><Icon name="chev" color={C.bright} /></button>
            <button type="button" aria-label="Theme"><Icon name="leaf" color={C.bright} /></button>
            <button type="button" aria-label="Collapse"><Icon name="arrow" size={13} color={C.bright} /></button>
          </TitleActions>
        </TitleBar>
        <SubBar>
          <Icon name="logoC" size={20} />
          <SubText>
            <SubLine>
              <em>P</em>
              <span>GΛI S</span>
              <span>Coowolteal STR-ilos</span>
            </SubLine>
            <SubTabs>
              <span>LOCO)</span>
              <em>:gc (RONPLO YUXR</em>
              <TabLine />
            </SubTabs>
          </SubText>
          <WindowButton type="button" aria-label="Window"><Icon name="window" size={18} color="#bbb8b4" /></WindowButton>
        </SubBar>
        <ToolBar>
          <Icon name="square" size={19} color={C.cyan} />
          <Icon name="grayTile" size={19} color="#a5a3a1" />
          <ToolItem type="button">Tou&nbsp; Jono</ToolItem>
          <ToolItem type="button" $gap={20} $tone="#85706d">8</ToolItem>
          <ToolItem type="button" $gap={10} $tone="#b5625f">Gor Prtas</ToolItem>
          <ToolItem type="button" $tone="#85706d">4</ToolItem>
          <ToolItem type="button">ı</ToolItem>
          <ToolItem type="button" $tone="#4fcfd0" $strong>bcdailtas</ToolItem>
          <ToolItem type="button" $gap={4}>Sl</ToolItem>
          <ToolItem type="button">Fuectiunl borxO</ToolItem>
          <ToolItem type="button" $gap={6}>G osdion RuiNis</ToolItem>
          <Spacer />
          <ToolItem type="button">Ri</ToolItem>
          <ToolItem type="button" $gap={4}>±-a</ToolItem>
          <ToolItem type="button">Inow tnvp</ToolItem>
          <ToolItem type="button">Groeo cihrtacg</ToolItem>
          <ToolItem type="button" $gap={4}>YalP</ToolItem>
          <Icon name="scribble" />
        </ToolBar>
        <Columns>
          <Content>
            <Columns>
              <Side>
                {items.map((item, i) => (
                  <SideRow key={i} item={item} />
                ))}
                <SideFoot>
                  <span>Oiorkcu</span>
                  <span>Knuortco8</span>
                  <Spacer />
                  <span>“ iouu</span>
                </SideFoot>
              </Side>
              <Work>
                <DocBar>
                  <Icon name="logoD" size={23} />
                  <DocTitle>La Stinsl. /icorvedhsgr A/Clivndrt</DocTitle>
                  <button type="button" aria-label="Pin"><Icon name="smallRing" size={14} color="#c9c6c2" /></button>
                </DocBar>
                <DocBar $tall>
                  <Icon name="logoE" size={29} />
                  <DocTitle $wide>Pl Crunvlzn</DocTitle>
                  <DocActions>
                    <button type="button" aria-label="Search"><Icon name="search" size={17} color="#c9c6c2" /></button>
                    <button type="button" aria-label="List"><Icon name="lines" size={13} color="#c9c6c2" /></button>
                    <button type="button" aria-label="Tint"><Icon name="drop" size={14} color="#c9c6c2" /></button>
                    <button type="button" aria-label="Menu"><Icon name="twoLines" size={13} color="#c9c6c2" /></button>
                  </DocActions>
                </DocBar>
                <Stage>
                  <NodeGraph />
                  <StageFoot>
                    <FootCell type="button" aria-label="Save"><Icon name="disk" size={15} color="#b5b2ae" /></FootCell>
                    <FootCell type="button" aria-label="Reset"><Icon name="zero" size={14} color="#c9c6c2" /></FootCell>
                  </StageFoot>
                </Stage>
                <Shelf />
              </Work>
            </Columns>
            <StatusLine>
              <StatusLead>
                <SideRow item={{ h: 33, text: "UPcotdes MIUR Itrs", b: ["paperTile", 18], strong: true }} />
              </StatusLead>
              <StatusBar>
                <Icon name="dot" size={14} color={C.lime} />
                Casdislro
              </StatusBar>
              <StatusTools>
                <button type="button" aria-label="Bend"><Icon name="bend" size={15} color="#c9c6c2" /></button>
                <button type="button" aria-label="Preview"><Icon name="cyanBox" size={21} /></button>
                <button type="button" aria-label="Visibility"><Icon name="eye" size={19} color="#8b8987" /></button>
              </StatusTools>
            </StatusLine>
            <InfoLine $h={35}>
              <InfoLead>
                <SideRow item={{ h: 34, text: "Amurqzr it it. Fkto Dwo", a: ["ring", 15, "#777"], b: ["grayTeal", 19], strong: true, line: true }} />
              </InfoLead>
              DG  cow  K  Rs3
              <InfoTools>
                <button type="button" aria-label="Link"><Icon name="linkBox" size={20} color="#8b8987" /></button>
                <button type="button" aria-label="Shapes"><Icon name="blobs" size={20} color="#8b8987" /></button>
              </InfoTools>
            </InfoLine>
            <InfoLine $h={25} $raised>
              <LeadTail>
                <Icon name="pair" color="#777" />
              </LeadTail>
              Onenr(2/C  Oio, rironyo Comwnbs  Ceoscinyp
              <InfoTools>
                <button type="button" aria-label="Back"><Icon name="back" size={12} /></button>
                <button type="button" aria-label="Chart"><Icon name="chartRing" size={19} color="#8b8987" /></button>
              </InfoTools>
            </InfoLine>
            <Lower>
              <ShortList>
                {shortItems.map((item) => (
                  <SideRow key={item.text} item={item} />
                ))}
              </ShortList>
              <Sheet>
                <SheetHead>
                  <Icon name="person" size={27} />
                  <SheetTitle>A. Samtihs Wefta  A lɛtisfn</SheetTitle>
                  <button type="button" aria-label="Close"><Icon name="close" size={12} color="#777" /></button>
                </SheetHead>
                <SheetRow $gap={10}>
                  <Icon name="scribble" size={22} color="#8e8a86" />
                  <SheetNote $pale>Imotoer IMs Ioms Tnpp Ihc</SheetNote>
                </SheetRow>
                <SheetRow $gap={8}>
                  <Icon name="pen" size={23} />
                  <div>
                    <p>Coonuosnot Iidi ı ancr .ig Borvo lipg RLI.V .A.A Ireskn Gs.Qotiklt 12s</p>
                    <p>Comikonsclt Iqnins bonor adnonaesvtslsli telfic Hot sorvwodnteirtion boov Ibninbo oltaninnling ol Ssonirunckunes G: P. Aludiuosrtht</p>
                    <p>Pporviduing Bipcotlonestnry ./1 sonienonov linnves Saoltidrouinoncl. ororniolllt slivonri</p>
                  </div>
                </SheetRow>
                <Nested>
                  <Icon name="sail" size={13} />
                  <SheetNote>Onoos Mvwte/T6R:a 'Iksd Innlsdodndoseacolt roiet Fa.rncnl</SheetNote>
                </Nested>
              </Sheet>
            </Lower>
          </Content>
          <Rail>
            <RailCell type="button" $h={30} aria-label="Expand"><Icon name="check" size={14} color={C.bright} /></RailCell>
            <RailCell type="button" $h={32} aria-label="Step"><Icon name="wedge" size={14} /></RailCell>
            <RailCell type="button" $h={58} $line aria-label="Badge"><Icon name="badge" size={18} /></RailCell>
            <Spacer />
            <RailCell type="button" $h={34} $line aria-label="Target"><Icon name="ring" size={13} /></RailCell>
            <RailCell type="button" $h={27} aria-label="Pair"><Icon name="pair" /></RailCell>
          </Rail>
        </Columns>
      </Shell>
      <TaskBar>
        {leftTasks.map(([w, name, size, label, color]) => (
          <TaskButton key={label} type="button" $w={w} aria-label={label}>
            {name === "board" ? <BoardThumb /> : name === "photo" ? <PhotoThumb /> : <Icon name={name} size={size} color={color} />}
          </TaskButton>
        ))}
        <Spacer />
        {rightTasks.map(([w, name, size, label]) => (
          <TaskButton key={label} type="button" $w={w} aria-label={label}>
            <Icon name={name} size={size} color="#c4c1bd" />
          </TaskButton>
        ))}
      </TaskBar>
    </Page>
  );
}
